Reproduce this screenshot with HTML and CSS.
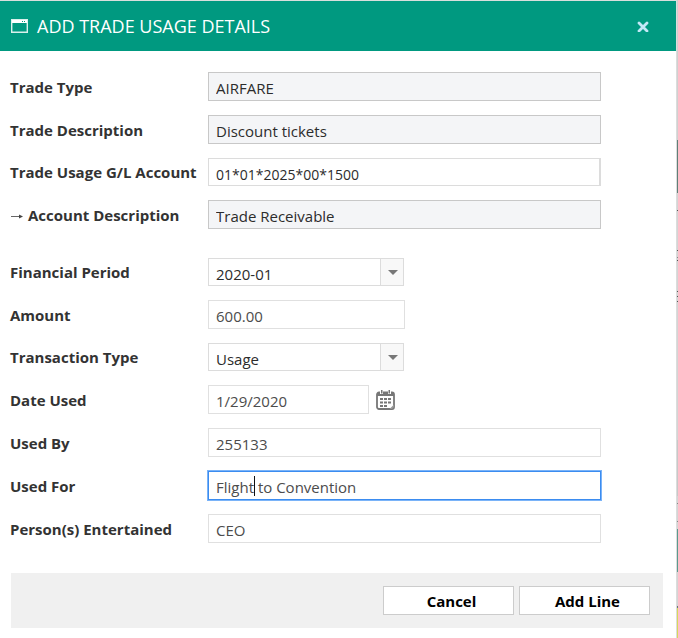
FILE: index.html
```html
<!DOCTYPE html>
<html lang="en">
<head>
<meta charset="utf-8">
<title>Add Trade Usage Details</title>
<link rel="stylesheet" href="styles.css">
</head>
<body>
<main class="dialog">
  <header class="dialog-header">
    <svg class="window-icon" width="17" height="14" viewBox="0 0 17 14" aria-hidden="true">
      <path d="M.7.700h15.600v12.600H.7z" fill="none" stroke="#d9f0eb" stroke-width="1.400"/>
      <path d="M1 1h15v3H1z" fill="#fff"/>
      <path d="M11 2h1v1h-1zM13 2h1v1h-1z" fill="#009980"/>
    </svg>
    <h1 class="dialog-title">ADD TRADE USAGE DETAILS</h1>
    <button class="close" type="button" aria-label="Close">
      <svg width="12" height="12" viewBox="0 0 12 12" aria-hidden="true">
        <path d="M2 3l8 8M10 3l-8 8" stroke="#c3e8f7" stroke-width="2.800" stroke-linecap="round"/>
      </svg>
    </button>
  </header>
  <form class="form">
    <div class="group">
      <div class="row"><label for="type">Trade Type</label><input class="field locked" id="type" value="AIRFARE" readonly></div>
      <div class="row"><label for="desc">Trade Description</label><input class="field locked" id="desc" value="Discount tickets" readonly></div>
      <div class="row"><label for="account">Trade Usage G/L Account</label><input class="field account" id="account" value="01*01*2025*00*1500"></div>
      <div class="row">
        <label for="account-desc"><svg class="arrow" width="14" height="9" viewBox="0 0 14 9" aria-hidden="true"><path d="M1 4.500h10" stroke="#666"/><path d="M9 2.500l4 2-4 2z" fill="#444"/></svg>Account Description</label>
        <input class="field locked" id="account-desc" value="Trade Receivable" readonly>
      </div>
    </div>
    <div class="group">
      <div class="row"><label for="period">Financial Period</label>
        <div class="select"><select class="field dark" id="period"><option>2020-01</option></select></div></div>
      <div class="row"><label for="amount">Amount</label><input class="field medium" id="amount" value="600.00"></div>
      <div class="row"><label for="transaction">Transaction Type</label>
        <div class="select"><select class="field dark" id="transaction"><option>Usage</option></select></div></div>
      <div class="row"><label for="date">Date Used</label>
        <div class="date">
          <input class="field short" id="date" value="1/29/2020">
          <button class="calendar" type="button" aria-label="Choose date">
            <svg width="19" height="20" viewBox="0 0 19 20" aria-hidden="true">
              <path d="M1 4.500a2 2 0 0 1 2-2h13a2 2 0 0 1 2 2V17a2 2 0 0 1-2 2H3a2 2 0 0 1-2-2z" fill="#fff" stroke="#777" stroke-width="1.800"/>
              <path d="M1 3.500l1.500-1.500h14L18 3.500V6H1z" fill="#777"/>
              <path d="M4 0h3v4H4zM12 0h3v4h-3z" fill="#fff"/>
              <path d="M5 0h1.500v3.500H5zM12.500 0H14v3.500h-1.500z" fill="#777"/>
              <path d="M4 8h3v2H4zM8 8h3v2H8zM12 8h3v2h-3zM4 11.500h3v2H4zM8 11.500h3v2H8zM12 11.500h3v2h-3zM4 15h3v2H4zM8 15h3v2H8z" fill="#777"/>
              <path d="M13.500 19l4.500-4.500V17l-2 2z" fill="#999"/>
            </svg>
          </button>
        </div></div>
      <div class="row"><label for="by">Used By</label><input class="field" id="by" value="255133"></div>
      <div class="row"><label for="for">Used For</label>
        <div class="active"><input class="field" id="for" value="Flight to Convention"><span class="caret"></span></div></div>
      <div class="row"><label for="persons">Person(s) Entertained</label><input class="field" id="persons" value="CEO"></div>
    </div>
    <footer class="actions">
      <button class="action" type="button">Cancel</button>
      <button class="action" type="submit">Add Line</button>
    </footer>
  </form>
</main>
<div class="page-edge"></div>
</body>
</html>
```

FILE: styles.css
```css
* {
  box-sizing: border-box;
}

body {
  display: flex;
  min-height: 100vh;
  margin: 0;
  background: #fff;
  color: #333;
  font-family: "Segoe UI", "Open Sans", "Noto Sans", sans-serif;
  font-size: 15px;
}

button,
input,
select {
  font: inherit;
}

.dialog {
  flex: 1;
  min-width: 0;
  border-top: 1px solid #d9dfdd;
}

.dialog-header {
  display: flex;
  align-items: center;
  gap: 9px;
  height: 50px;
  padding: 0 27px 0 11px;
  background: #009980;
  color: #fff;
}

.dialog-title {
  flex: 1;
  margin: 0;
  font-size: 18px;
  font-weight: 400;
}

.close {
  display: flex;
  padding: 0;
  border: 0;
  background: none;
}

.form {
  padding-top: 21px;
}

.group {
  display: flex;
  flex-direction: column;
  gap: 14px;
  padding: 0 75px 0 10px;
  margin-bottom: 29px;
}

.row {
  display: grid;
  grid-template-columns: 198px minmax(0, 1fr);
  align-items: center;
}

.row label {
  font-weight: 700;
  line-height: 20px;
  white-space: nowrap;
}

.arrow {
  margin-right: 4px;
}

.field {
  display: block;
  width: 100%;
  height: 29px;
  padding: 2px 7px 0;
  border: 1px solid #e0e0e0;
  border-radius: 0;
  outline: 0;
  background: #fff;
  color: #4c4c4c;
  font-size: 15px;
}

.locked {
  border-color: #c8c8c8;
  background: #f4f5f7;
  color: #2c2c2c;
}

.account {
  height: 28px;
  padding-top: 4px;
  border-color: #dcdcdc;
  border-right-width: 2px;
  color: #2c2c2c;
  font-size: 14px;
}

.select {
  position: relative;
  width: 196px;
}

.dark {
  height: 28px;
  padding-top: 4px;
  appearance: none;
  border-color: #dcdcdc;
  color: #2c2c2c;
}

.select::before {
  content: "";
  position: absolute;
  top: 1px;
  right: 1px;
  bottom: 1px;
  width: 22px;
  border-left: 1px solid #dcdcdc;
  background: #f8f8f8;
  pointer-events: none;
}

.select::after {
  content: "";
  position: absolute;
  top: 12px;
  right: 6px;
  border: 5px solid transparent;
  border-top-color: #777;
  border-bottom: 0;
  pointer-events: none;
}

.medium {
  width: 197px;
}

.date {
  display: flex;
  align-items: center;
  gap: 7px;
}

.short {
  width: 161px;
}

.calendar {
  display: flex;
  padding: 0;
  border: 0;
  background: none;
}

.active {
  position: relative;
}

.active .field {
  border-color: #3b8cf0;
  box-shadow: 0 0 0 1px #7ab3f8;
}

.caret {
  position: absolute;
  top: 5px;
  left: 46px;
  width: 1px;
  height: 20px;
  background: #111;
}

.actions {
  display: flex;
  justify-content: flex-end;
  gap: 5px;
  margin: 30px 13px 10px 11px;
  padding: 13px;
  background: #f0f0f0;
}

.action {
  width: 131px;
  height: 29px;
  padding: 0 0 0 6px;
  border: 1px solid #ccc;
  background: #fff;
  color: #000;
  font-size: 15px;
  font-weight: 700;
}

.page-edge {
  width: 2px;
  border-left: 1px solid #dcdcdc;
  background: linear-gradient(#d0d0d0 140px, #5f7f78 140px 193px, #d4d4d4 193px 210px, #555 210px 211px, #d4d4d4 211px 250px, #555 250px 251px, #d4d4d4 251px 257px, #888 257px 258px, #d4d4d4 258px 260px, #555 260px 261px, #d4d4d4 261px 291px, #555 291px 292px, #d4d4d4 292px 296px, #555 296px 297px, #d4d4d4 297px 301px, #555 301px 302px, #d4d4d4 302px 440px, #c8c8c8 440px 496px, #d4d4d4 496px 503px, #888 503px 504px, #d4d4d4 504px 521px, #888 521px 522px, #d4d4d4 522px 529px, #5a9a8e 529px 572px, #d4d4d4 572px 606px, #68757c 606px 608px, #d6d85a 608px);
}
```
